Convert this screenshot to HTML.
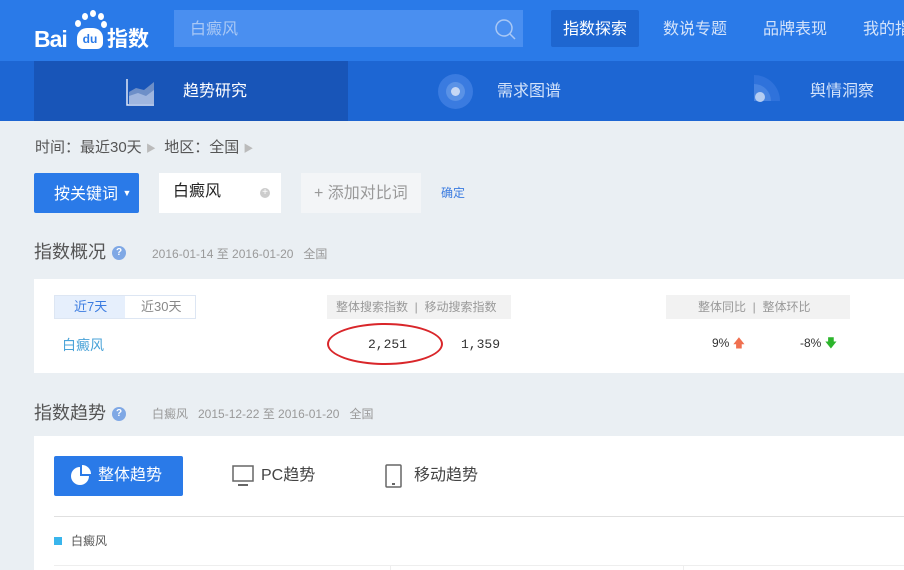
<!DOCTYPE html>
<html><head><meta charset="utf-8"><style>
*{margin:0;padding:0;box-sizing:border-box}
body{width:904px;height:570px;overflow:hidden;background:#eaeff3;font-family:"Liberation Sans","Noto Sans CJK SC",sans-serif;position:relative}
.a{position:absolute}
.top{left:0;top:0;width:904px;height:61px;background:#2a7ae8}
.nav{left:0;top:61px;width:904px;height:60px;background:#1d66d3}
.t{white-space:nowrap}
</style></head><body>
<div class="a top"></div>
<div class="a nav"></div>
<!-- logo -->
<div class="a t" style="left:34px;top:26px;color:#fff;font:bold 23px 'Liberation Sans',sans-serif;letter-spacing:-1px">Bai</div>
<div class="a" style="left:77px;top:28px;width:26px;height:21px;background:#fff;border-radius:10px 10px 6px 6px;color:#2a7ae8;font:bold 12px 'Liberation Sans';text-align:center;line-height:22px">du</div>
<div class="a" style="left:82px;top:13px;width:6px;height:7px;background:#fff;border-radius:50%"></div>
<div class="a" style="left:90px;top:10px;width:6px;height:7px;background:#fff;border-radius:50%"></div>
<div class="a" style="left:98px;top:13px;width:6px;height:7px;background:#fff;border-radius:50%"></div>
<div class="a" style="left:75px;top:20px;width:6px;height:7px;background:#fff;border-radius:50%"></div>
<div class="a" style="left:101px;top:21px;width:6px;height:7px;background:#fff;border-radius:50%"></div>
<div class="a t" style="left:107px;top:25px;color:#fff;font:bold 21px 'Noto Sans CJK SC',sans-serif;line-height:26px">指数</div>
<!-- search -->
<div class="a" style="left:174px;top:10px;width:349px;height:37px;background:#4a8ff0"></div>
<div class="a t" style="left:190px;top:20px;color:#a9c8f5;font-size:16px;line-height:20px">白癜风</div>
<svg class="a" style="left:494px;top:18px" width="24" height="24"><circle cx="10" cy="10" r="8" fill="none" stroke="#a9c8f5" stroke-width="1.5"/><line x1="16" y1="16" x2="21" y2="21" stroke="#a9c8f5" stroke-width="1.5"/></svg>
<div class="a" style="left:551px;top:10px;width:88px;height:37px;background:#1e66d0;border-radius:2px"></div>
<div class="a t" style="left:563px;top:20px;color:#fff;font-size:16px;line-height:20px">指数探索</div>
<div class="a t" style="left:663px;top:20px;color:#d4e3fa;font-size:16px;line-height:20px">数说专题</div>
<div class="a t" style="left:763px;top:20px;color:#d4e3fa;font-size:16px;line-height:20px">品牌表现</div>
<div class="a t" style="left:863px;top:20px;color:#d4e3fa;font-size:16px;line-height:20px">我的指数</div>
<!-- nav -->
<div class="a" style="left:34px;top:61px;width:314px;height:60px;background:#1855b8"></div>
<svg class="a" style="left:126px;top:78px" width="30" height="30"><path d="M3 14 L10 10 L18 12 L28 4 L28 26 L3 26Z" fill="#6d8fc8"/><path d="M3 18 L12 15 L20 18 L28 12 L28 26 L3 26Z" fill="#9fb6df"/><path d="M1 1 V27 H28" fill="none" stroke="#dfe8f7" stroke-width="1.5"/></svg>
<div class="a t" style="left:183px;top:82px;color:#fff;font-size:16px;line-height:20px">趋势研究</div>
<div class="a" style="left:438px;top:74px;width:35px;height:35px;border-radius:50%;background:#3a7be0"></div>
<div class="a" style="left:446px;top:82px;width:19px;height:19px;border-radius:50%;background:#5a92e6"></div>
<div class="a" style="left:451px;top:87px;width:9px;height:9px;border-radius:50%;background:#c6d8f5"></div>
<div class="a t" style="left:497px;top:82px;color:#d4e3fa;font-size:16px;line-height:20px">需求图谱</div>
<svg class="a" style="left:754px;top:75px" width="30" height="30"><path d="M0 0 A26 26 0 0 1 26 26 L0 26Z" fill="#2f72db"/><path d="M0 9 A17 17 0 0 1 17 26 L0 26Z" fill="#4784e2"/><circle cx="6" cy="22" r="5" fill="#b5cdf2"/></svg>
<div class="a t" style="left:810px;top:82px;color:#d4e3fa;font-size:16px;line-height:20px">舆情洞察</div>
<!-- filters -->
<div class="a t" style="left:35px;top:138px;color:#555;font-size:15px;line-height:20px">时间：最近30天 <span style="color:#bbb;font-size:10px">▶</span>&nbsp; 地区：全国 <span style="color:#bbb;font-size:10px">▶</span></div>
<div class="a" style="left:34px;top:173px;width:105px;height:40px;background:#2a7ae8;border-radius:2px"></div>
<div class="a t" style="left:54px;top:183px;color:#fff;font-size:16px;line-height:20px">按关键词 <span style="font-size:9px;vertical-align:3px">▼</span></div>
<div class="a" style="left:159px;top:173px;width:122px;height:40px;background:#fff"></div>
<div class="a t" style="left:173px;top:182px;color:#222;font-size:16px;line-height:20px">白癜风</div>
<div class="a" style="left:260px;top:188px;width:10px;height:10px;border-radius:50%;background:#ccc;color:#fff;font-size:10px;line-height:10px;text-align:center">+</div>
<div class="a" style="left:301px;top:173px;width:120px;height:40px;background:#f3f5f7"></div>
<div class="a t" style="left:314px;top:184px;color:#999;font-size:16px;line-height:20px">+ 添加对比词</div>
<div class="a t" style="left:441px;top:185px;color:#3a7be0;font-size:12px;line-height:16px">确定</div>
<!-- overview -->
<div class="a t" style="left:34px;top:241px;color:#555;font-size:18px;line-height:22px">指数概况</div>
<div class="a" style="left:112px;top:246px;width:14px;height:14px;border-radius:50%;background:#7fa8e5;color:#fff;font-size:10px;line-height:14px;text-align:center;font-weight:bold">?</div>
<div class="a t" style="left:152px;top:246px;color:#999;font-size:12px;line-height:16px">2016-01-14 至 2016-01-20 &nbsp;&nbsp;全国</div>
<div class="a" style="left:34px;top:279px;width:870px;height:94px;background:#fff"></div>
<div class="a" style="left:54px;top:295px;width:142px;height:24px;border:1px solid #dde6f3"></div>
<div class="a" style="left:55px;top:296px;width:70px;height:22px;background:#e6effc"></div>
<div class="a t" style="left:74px;top:299px;color:#3a7be0;font-size:13px;line-height:16px">近7天</div>
<div class="a t" style="left:141px;top:299px;color:#888;font-size:13px;line-height:16px">近30天</div>
<div class="a" style="left:327px;top:295px;width:184px;height:24px;background:#f2f2f2"></div>
<div class="a t" style="left:336px;top:299px;color:#999;font-size:12px;line-height:16px">整体搜索指数 &nbsp;| &nbsp;移动搜索指数</div>
<div class="a" style="left:666px;top:295px;width:184px;height:24px;background:#f2f2f2"></div>
<div class="a t" style="left:698px;top:299px;color:#999;font-size:12px;line-height:16px">整体同比 &nbsp;| &nbsp;整体环比</div>
<div class="a t" style="left:62px;top:336px;color:#4aa3d8;font-size:14px;line-height:18px">白癜风</div>
<div class="a t" style="left:368px;top:336px;color:#333;font:13px 'Liberation Mono',monospace;line-height:18px">2,251</div>
<div class="a t" style="left:461px;top:336px;color:#333;font:13px 'Liberation Mono',monospace;line-height:18px">1,359</div>
<div class="a" style="left:327px;top:323px;width:116px;height:42px;border:2px solid #d9262a;border-radius:50%"></div>
<div class="a t" style="left:712px;top:335px;color:#333;font-size:12px;line-height:16px">9% <span style="color:#f07050">🡅</span></div>
<div class="a t" style="left:800px;top:335px;color:#333;font-size:12px;line-height:16px">-8% <span style="color:#2cb52c">🡇</span></div>
<!-- trend -->
<div class="a t" style="left:34px;top:402px;color:#555;font-size:18px;line-height:22px">指数趋势</div>
<div class="a" style="left:112px;top:407px;width:14px;height:14px;border-radius:50%;background:#7fa8e5;color:#fff;font-size:10px;line-height:14px;text-align:center;font-weight:bold">?</div>
<div class="a t" style="left:152px;top:406px;color:#999;font-size:12px;line-height:16px">白癜风 &nbsp;&nbsp;2015-12-22 至 2016-01-20 &nbsp;&nbsp;全国</div>
<div class="a" style="left:34px;top:436px;width:870px;height:134px;background:#fff"></div>
<div class="a" style="left:54px;top:456px;width:129px;height:40px;background:#2a7ae8;border-radius:2px"></div>
<svg class="a" style="left:70px;top:465px" width="22" height="22"><path d="M10 2 A9 9 0 1 0 19 11 L10 11Z" fill="#fff"/><path d="M12 0 A9 9 0 0 1 21 9 L12 9Z" fill="#fff"/></svg>
<div class="a t" style="left:98px;top:466px;color:#fff;font-size:16px;line-height:20px">整体趋势</div>
<svg class="a" style="left:232px;top:465px" width="24" height="24"><rect x="1" y="1" width="20" height="15" fill="none" stroke="#666" stroke-width="1.5"/><rect x="6" y="19" width="10" height="2" fill="#666"/></svg>
<div class="a t" style="left:261px;top:466px;color:#444;font-size:16px;line-height:20px">PC趋势</div>
<svg class="a" style="left:385px;top:464px" width="20" height="26"><rect x="1" y="1" width="15" height="22" rx="1" fill="none" stroke="#666" stroke-width="1.5"/><rect x="7" y="19" width="3" height="2" fill="#666"/></svg>
<div class="a t" style="left:414px;top:466px;color:#444;font-size:16px;line-height:20px">移动趋势</div>
<div class="a" style="left:54px;top:516px;width:850px;height:1px;background:#e0e0e0"></div>
<div class="a" style="left:54px;top:537px;width:8px;height:8px;background:#39b5ec"></div>
<div class="a t" style="left:71px;top:533px;color:#555;font-size:12px;line-height:16px">白癜风</div>
<div class="a" style="left:54px;top:565px;width:850px;height:1px;background:#eee"></div>
<div class="a" style="left:390px;top:565px;width:1px;height:5px;background:#eee"></div>
<div class="a" style="left:683px;top:565px;width:1px;height:5px;background:#eee"></div>
</body></html>
